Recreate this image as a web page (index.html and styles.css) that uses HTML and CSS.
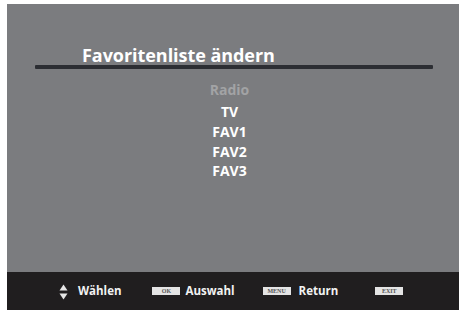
FILE: index.html
```html
<!DOCTYPE html>
<html>
<head>
<meta charset="utf-8">
<link rel="stylesheet" href="styles.css">
</head>
<body>
<div class="screen">
  <h1 class="title">Favoritenliste ändern</h1>
  <div class="rule"></div>
  <ul class="list">
    <li class="item dim">Radio</li>
    <li class="item tv">TV</li>
    <li class="item">FAV1</li>
    <li class="item">FAV2</li>
    <li class="item f3">FAV3</li>
  </ul>
  <div class="footer">
    <div class="hint">
      <svg class="updown" width="9" height="16" viewBox="0 0 9 16">
        <path d="M4.5 0.5 L8.5 6.5 L0.5 6.5 Z" fill="#e6e6e6"/>
        <path d="M4.5 15.5 L8.5 9.5 L0.5 9.5 Z" fill="#e6e6e6"/>
      </svg>
      <span class="label">Wählen</span>
    </div>
    <div class="hint ok">
      <span class="key">OK</span>
      <span class="label">Auswahl</span>
    </div>
    <div class="hint menu">
      <span class="key">MENU</span>
      <span class="label">Return</span>
    </div>
    <div class="hint exit">
      <span class="key">EXIT</span>
    </div>
  </div>
</div>
</body>
</html>
```
FILE: styles.css
```css
html, body {
  margin: 0;
  padding: 0;
  background: #ffffff;
}
body {
  width: 462px;
  height: 312px;
  overflow: hidden;
  font-family: "Open Sans", "Noto Sans", sans-serif;
}
.screen {
  margin: 4px 2px 0 7px;
  width: 452px;
  height: 306px;
  background: #7b7c7f;
  display: flex;
  flex-direction: column;
}
.title {
  margin: 40px 0 0 75px;
  font-size: 18px;
  line-height: 23px;
  font-weight: 700;
  color: #ffffff;
  letter-spacing: -0.05px;
}
.rule {
  margin: -2px 0 0 28px;
  width: 398px;
  height: 4px;
  background: #2c2e33;
  border-radius: 1px;
}
.list {
  list-style: none;
  margin: 11px 0 0 0;
  padding: 0 7px 0 0;
  display: flex;
  flex-direction: column;
  align-items: center;
}
.item {
  font-size: 14px;
  line-height: 20px;
  font-weight: 700;
  color: #ffffff;
}
.item.dim {
  color: #a2a3a5;
}
.item.tv {
  margin-top: 2px;
}
.item.f3 {
  margin-top: -1px;
}
.footer {
  margin-top: auto;
  height: 38px;
  background: #201e1f;
  display: flex;
  align-items: center;
  padding-left: 52px;
}
.hint {
  display: flex;
  align-items: center;
}
.updown {
  display: block;
  margin-top: 1px;
}
.label {
  font-size: 11.5px;
  font-weight: 700;
  color: #f2f2f2;
  margin-left: 10px;
  line-height: 14px;
}
.key {
  display: block;
  width: 28px;
  height: 8px;
  background: #e4e4e4;
  color: #555;
  font-family: "Liberation Serif", serif;
  font-size: 6px;
  line-height: 8px;
  text-align: center;
  font-weight: 700;
}
.ok {
  margin-left: 31px;
}
.ok .label {
  margin-left: 5px;
}
.menu {
  margin-left: 28px;
}
.menu .label {
  margin-left: 8px;
}
.exit {
  margin-left: 37px;
}
```
